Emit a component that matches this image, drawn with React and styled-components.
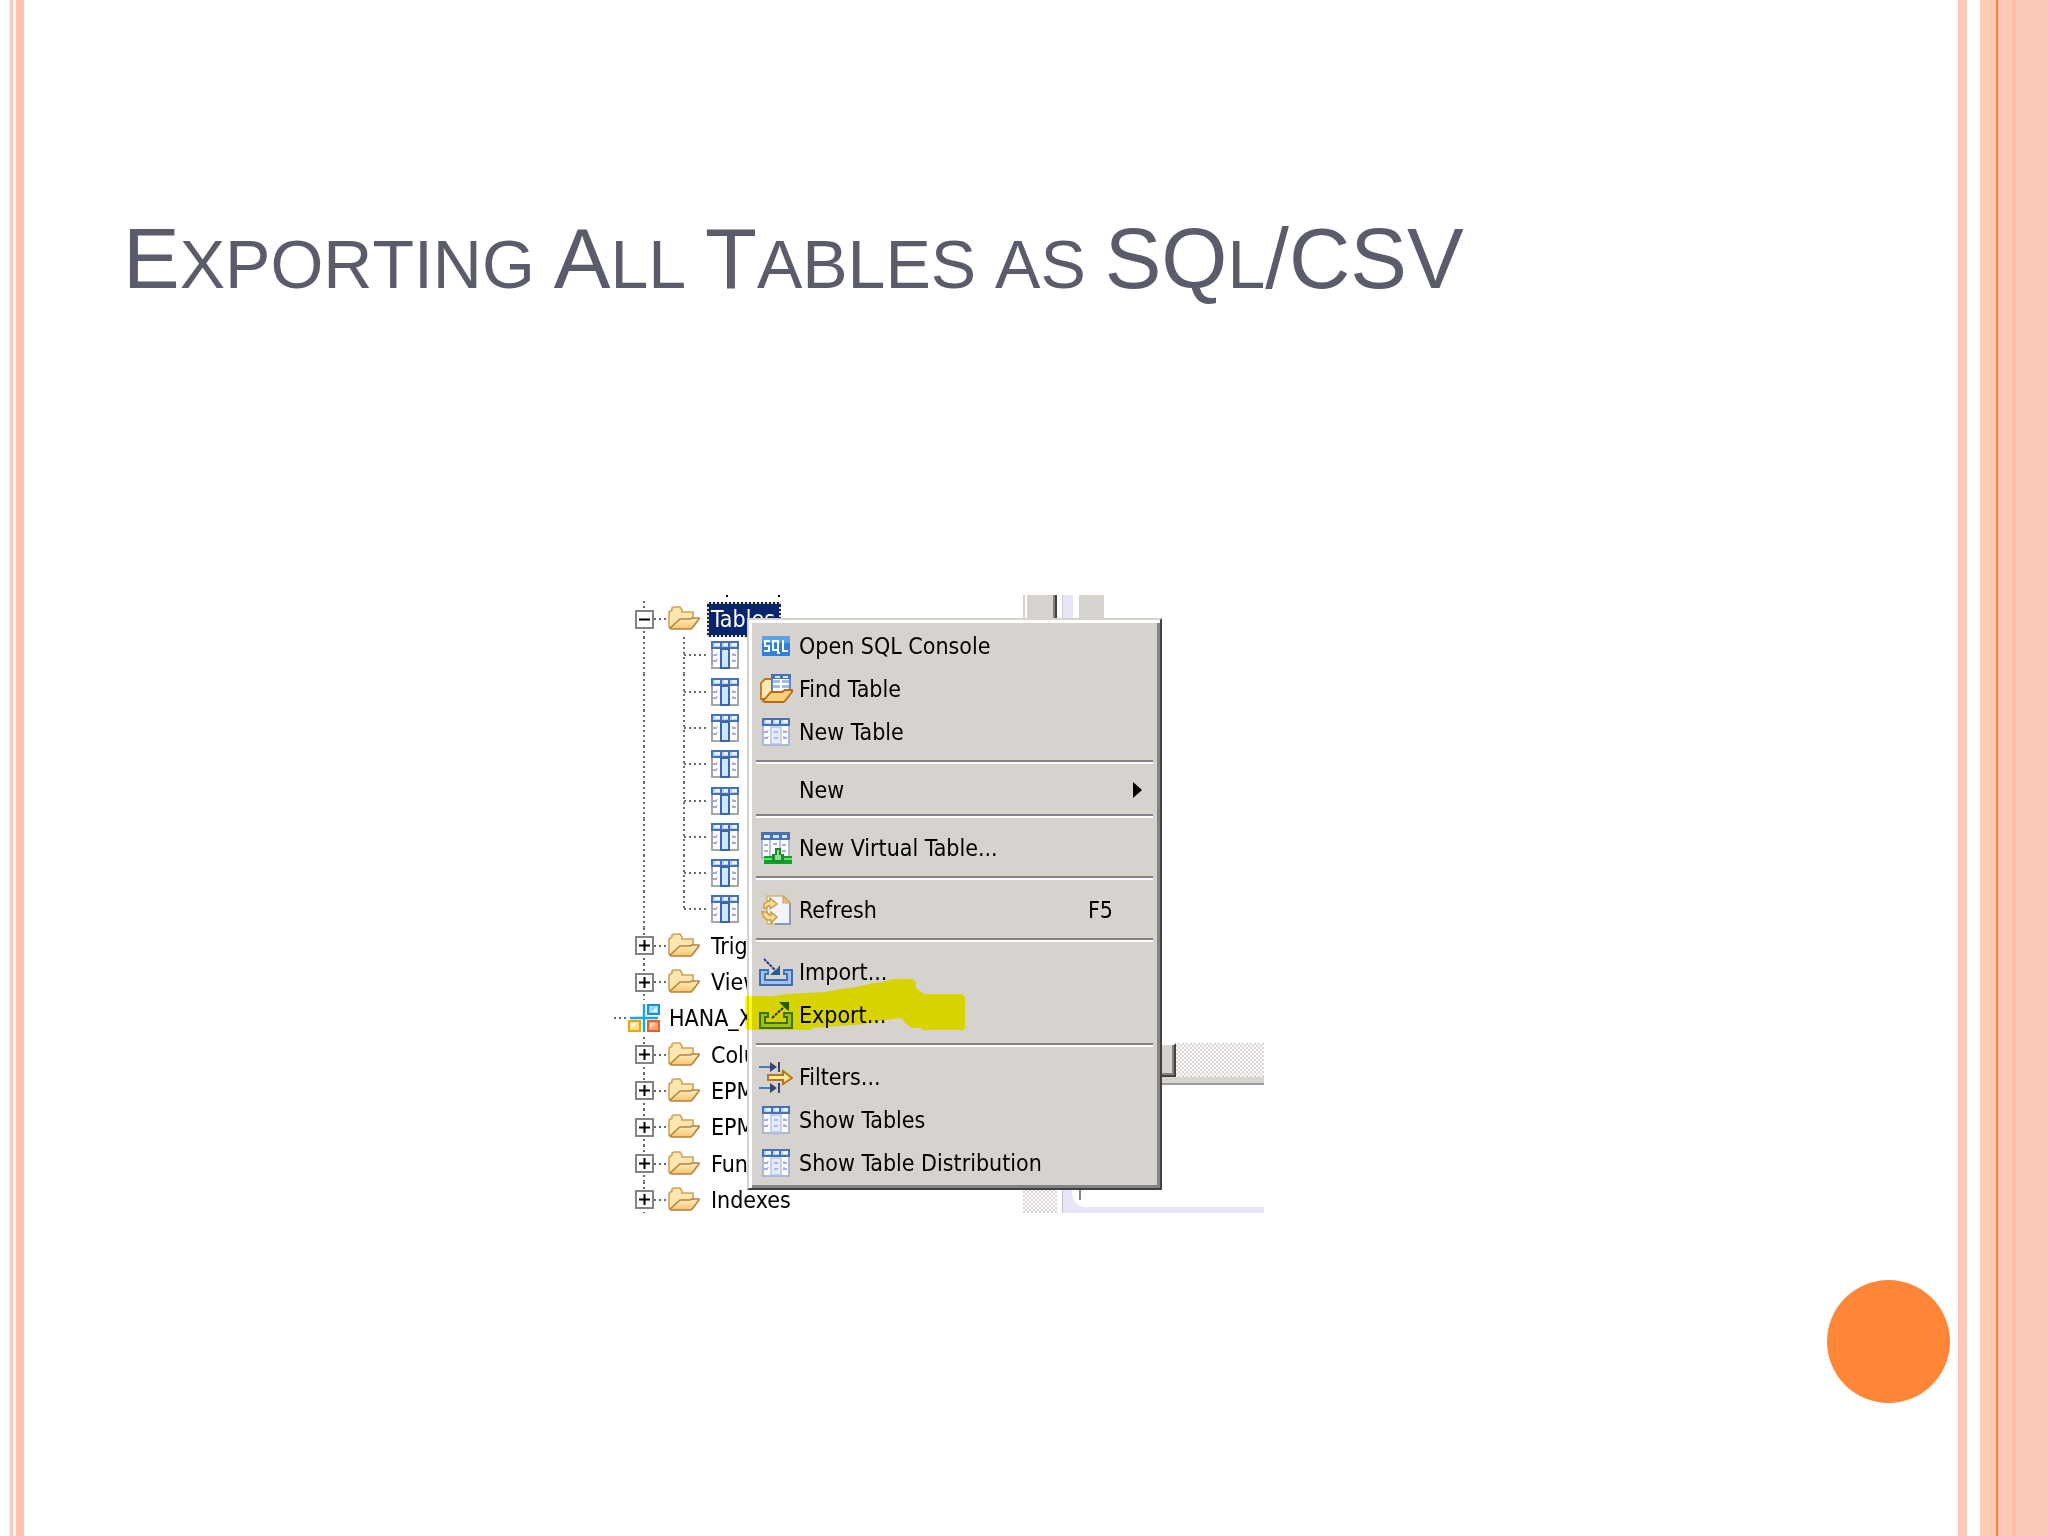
import React from 'react';
import styled, { createGlobalStyle, css } from 'styled-components';

const face = '#d6d3ce';
const shade = '#848284';
const dark = '#424142';
const lavender = '#e7e5f7';

const GlobalStyle = createGlobalStyle`
  *, *::before, *::after { box-sizing: border-box; }
  body { margin: 0; background: #fefffe; }
  button { font: inherit; color: inherit; border: 0; background: none; padding: 0; text-align: left; }
`;

const Slide = styled.div`
  display: flex;
  min-height: 100vh;
  overflow: hidden;
  font-family: 'Liberation Sans', Arial, sans-serif;
`;

const Stripe = styled.div`
  flex: 0 0 ${(p) => p.$w}px;
  background: ${(p) => p.$c};
`;

const Content = styled.main`
  flex: 1;
  min-width: 0;
  display: flex;
  flex-direction: column;
  padding: 209px 0 133px;
`;

const Title = styled.h1`
  margin: 0;
  padding-left: 99px;
  font-size: 85px;
  line-height: 100px;
  font-weight: 400;
  font-kerning: none;
  color: #5a5c6b;
  white-space: nowrap;
`;

const Small = styled.span`
  font-size: 68px;
  text-transform: uppercase;
`;

const FigureArea = styled.section`
  display: flex;
  justify-content: center;
  padding: 281px 104px 0 0;
`;

const Footer = styled.footer`
  display: flex;
  justify-content: flex-end;
  margin-top: auto;
  padding-right: 8px;
`;

const Disc = styled.div`
  width: 123px;
  height: 123px;
  border-radius: 50%;
  background: #ff8637;
`;

const Shot = styled.div`
  position: relative;
  display: grid;
  grid-template-columns: 409px 34px 5px 202px;
  height: 618px;
  background: #fff;
  font-family: 'DejaVu Sans Condensed', 'DejaVu Sans', sans-serif;
  font-size: 23px;
  line-height: 28px;
  color: #000;
`;

/* ---- tree ---- */

const TreePane = styled.div`
  min-width: 0;
  height: 618px;
  overflow: hidden;
`;

const CutRow = styled.div`
  display: flex;
  justify-content: space-between;
  height: 6px;
  width: 166px;
  padding-left: 112px;
`;

const Mark = styled.span`
  width: 2px;
  height: 2px;
  background: #000;
`;

const Tree = styled.ul`
  list-style: none;
  margin: 0;
  padding: 0;
  display: grid;
  grid-auto-rows: 1fr;
  height: 617px;
`;

const Row = styled.li`
  display: grid;
  grid-template-columns: ${(p) => (p.$system ? '14px 32px 5px 1fr' : '20px 20px 14px 32px 7px 1fr')};
  align-items: center;
  min-height: 0;
  white-space: nowrap;
`;

const dotsDown = css`
  background: repeating-linear-gradient(180deg, #6b6b6b 0 2px, transparent 2px 5px) center / 2px 100% no-repeat;
`;

const DotsAcross = styled.span`
  height: 2px;
  background: repeating-linear-gradient(90deg, #6b6b6b 0 2px, transparent 2px 5px);
`;

const Rail = styled.span`
  align-self: ${(p) => (p.$half ? 'start' : 'stretch')};
  height: ${(p) => (p.$half ? '50%' : 'auto')};
  display: flex;
  align-items: center;
  justify-content: center;
  ${dotsDown}
`;

const Branch = styled(DotsAcross)`
  grid-column: 4 / 6;
  grid-row: 1;
  margin-left: 16px;
`;

const BranchRail = styled(Rail)`
  grid-column: 4;
  grid-row: 1;
`;

const Expander = styled.button`
  width: 19px;
  height: 19px;
  border: 2px solid ${shade};
  background: #fff;
  display: flex;
`;

const Label = styled.span`
  padding-left: 4px;
  display: flex;
  align-items: center;
`;

const Selected = styled.span`
  display: block;
  width: 74px;
  height: 35px;
  padding: 2px 4px;
  line-height: 31px;
  color: #fff;
  background: #08246b;
  outline: 2px dotted #f4dc94;
  outline-offset: -2px;
`;

/* ---- editor remnants ---- */

const dither = css`
  background: repeating-conic-gradient(#d9d3d2 0 25%, #fff 0 50%) 0 0 / 4px 4px;
`;

const ScrollColumn = styled.div`
  display: flex;
  flex-direction: column;
  justify-content: space-between;
`;

const ScrollThumb = styled.div`
  height: 24px;
  background: linear-gradient(90deg, ${face} 0 2px, #fff 2px 4px, ${face} 4px 30px, ${shade} 30px 32px, ${dark} 32px);
`;

const Dither = styled.div`
  height: 24px;
  ${dither}
`;

const EditorColumn = styled.div`
  display: flex;
  flex-direction: column;
`;

const EditorTop = styled.div`
  height: 24px;
  width: 42px;
  background: linear-gradient(90deg, ${face} 0 1px, ${lavender} 1px 11px, #fff 11px 17px, ${face} 17px);
`;

const HScroll = styled.div`
  margin-top: 424px;
  height: 42px;
  display: flex;
  border-bottom: 2px solid #9c9a9c;
  background: ${face};
`;

const HThumb = styled.div`
  width: 114px;
  height: 34px;
  background: ${face};
  border: solid;
  border-width: 2px 2px 2px 0;
  border-color: #fff ${dark} ${dark} #fff;
  box-shadow: inset -2px -2px 0 ${shade};
`;

const HTrack = styled.div`
  flex: 1;
  height: 34px;
  ${dither}
`;

const EditorBottom = styled.div`
  margin-top: auto;
  height: 24px;
  border-left: 1px solid #c6c3c6;
  background: ${lavender};
  padding: 0 0 6px 9px;
`;

const EditorPage = styled.div`
  height: 18px;
  background: linear-gradient(${shade}, ${shade}) 7px 0 / 2px 11px no-repeat #fff;
  border-bottom-left-radius: 14px;
`;

/* ---- context menu ---- */

const Menu = styled.div`
  position: absolute;
  left: 133px;
  top: 23px;
  width: 415px;
  background: ${face};
  border: 2px solid;
  border-color: ${face} ${dark} ${dark} ${face};
  box-shadow: inset 3px 3px 0 #fff, inset -3px -3px 0 ${shade};
  padding: 4px 3px;
`;

const Item = styled.button`
  display: grid;
  grid-template-columns: 36px 1fr auto;
  column-gap: 5px;
  align-items: center;
  width: 100%;
  height: ${(p) => (p.$submenu ? 35 : 43)}px;
  padding: 0 ${(p) => (p.$submenu ? 15 : 44)}px 0 6px;
  white-space: nowrap;
`;

const IconCell = styled.span`
  display: flex;
  justify-content: center;
`;

const Divider = styled.hr`
  margin: 7px 4px 8px 4px;
  height: 4px;
  border: 0;
  border-top: 2px solid ${shade};
  background: #fff;
`;

const Marker = styled.svg`
  position: absolute;
  left: 131px;
  top: 383px;
  mix-blend-mode: multiply;
  pointer-events: none;
`;

/* ---- icons ---- */

const Svg = styled.svg`
  display: block;
  flex: none;
`;

const FolderIcon = () => (
  <Svg width="32" height="26" viewBox="0 0 32 26">
    <defs>
      <linearGradient id="fold" x1="0" y1="0" x2="0" y2="1">
        <stop offset="0" stopColor="#fff0c4" />
        <stop offset="1" stopColor="#f7c46c" />
      </linearGradient>
    </defs>
    <path d="M1 21V6l3-2V2l2-1h6l2 3v2h11v7l-3 9H3z" fill="#ffe6b0" stroke="#cfa25c" strokeWidth="1.6" />
    <path d="M2 22L12 13h10l2-1h7v1l-6 8-2 2H3z" fill="url(#fold)" stroke="#b97f3c" strokeWidth="1.6" />
  </Svg>
);

const TableIcon = ({ soft }) => (
  <Svg width="28" height="28" viewBox="0 0 28 28">
    <rect x="1" y="1" width="26" height="26" fill="#fff" stroke={soft ? '#a9b8d4' : '#a3a6aa'} strokeWidth="2" />
    <rect x="0" y="0" width="28" height="8" fill="#4671b9" />
    <path d="M2 2h7v4H2zM11 2h6v4h-6zM19 2h7v4h-7z" fill="#b4d0f4" />
    <path d="M4 2h5v3H4zM13 2h4v3h-4zM21 2h5v3h-5z" fill="#eaf3ff" />
    {soft ? (
      <path d="M9 9h10v17H9z" fill="#e4ecfc" stroke="#b7c5e4" strokeWidth="1.5" />
    ) : (
      <path d="M10 8h8v19h-8z" fill="#cfe6ff" stroke="#3a66b0" strokeWidth="2" />
    )}
    <path d="M2 14h4M2 20h4M21 14h4M21 20h4" stroke="#8c93cf" strokeWidth="1.6" />
    <path d="M6 12v1M6 18v1M22 12v1M22 18v1" stroke="#c3c9ea" strokeWidth="2" />
    {soft && <path d="M12 14h4M12 20h4" stroke="#9aa6dc" strokeWidth="1.6" />}
  </Svg>
);

const SystemIcon = () => (
  <Svg width="32" height="30" viewBox="0 0 32 30">
    <path d="M16 1v28M2 15h28" stroke="#1aa5e8" strokeWidth="2.4" />
    <rect x="20" y="2" width="11" height="9" fill="#8fdcff" stroke="#1b8fd8" strokeWidth="2" />
    <path d="M23 9l6-5v5z" fill="#fff" opacity=".7" />
    <rect x="1" y="18" width="11" height="10" fill="#ffe08a" stroke="#e6a50e" strokeWidth="2" />
    <path d="M3 26l6-6h-6z" fill="#fff" opacity=".8" />
    <rect x="20" y="18" width="11" height="10" fill="#f9a36f" stroke="#e2622a" strokeWidth="2" />
    <path d="M22 26l6-6h-6z" fill="#fff" opacity=".5" />
  </Svg>
);

const SqlIcon = () => (
  <Svg width="28" height="20" viewBox="0 0 28 20" fill="none">
    <rect width="28" height="20" fill="#2f80d6" />
    <rect width="28" height="7" fill="#5aa2e6" />
    <path d="M8 5H3v5h4v5H2" stroke="#fff" strokeWidth="2" />
    <path d="M16 14V5h-5v9h5M16 14v3h2" stroke="#fff" strokeWidth="2" />
    <path d="M21 4v11h5" stroke="#fff" strokeWidth="2" />
  </Svg>
);

const FindIcon = () => (
  <Svg width="33" height="29" viewBox="0 0 33 29">
    <path d="M1 25V9l4-4h7v20z" fill="#ffe9b0" stroke="#b9771f" strokeWidth="1.8" />
    <rect x="12" y="1" width="18" height="17" fill="#fff" stroke="#4671b9" strokeWidth="1.6" />
    <path d="M11 0h20v5H11z" fill="#4671b9" />
    <path d="M13 6h7v3h-7zM22 6h7v3h-7zM13 11h7v3h-7zM22 11h7v3h-7z" fill="#9fbdf0" />
    <path d="M15 2h5v2h-5zM23 2h5v2h-5z" fill="#dbe9ff" />
    <path d="M3 27L11 18h11l3-2h7v2l-7 9-2 1H5z" fill="#fbce7a" stroke="#b56a14" strokeWidth="1.8" />
  </Svg>
);

const VirtualIcon = () => (
  <Svg width="31" height="32" viewBox="0 0 31 32">
    <rect x="1" y="1" width="27" height="25" fill="#fff" stroke="#a9b8d4" strokeWidth="2" />
    <rect width="29" height="8" fill="#4671b9" />
    <path d="M3 3h6v3H3zM12 3h6v3h-6zM21 3h5v3h-5z" fill="#d5e7fb" />
    <path d="M9 8v17M19 8v17" stroke="#b7c5e4" strokeWidth="2" />
    <path d="M3 13h4M3 19h4M21 13h4M21 19h4M12 12h4" stroke="#8c93cf" strokeWidth="1.6" />
    <path d="M3 24h28v8H3z" fill="#12a02c" />
    <path d="M3 27h28" stroke="#7be07f" strokeWidth="1.8" />
    <path d="M14 16h6v6h3v8H11v-8h3z" fill="#1b8c2c" />
    <path d="M16 18h2v5h2v5h-6v-5h2z" fill="#8fdc8c" />
  </Svg>
);

const RefreshIcon = () => (
  <Svg width="31" height="30" viewBox="0 0 31 30">
    <path d="M6 1h17l6 6v22H6z" fill="#f2f5fd" stroke="#d3b87f" strokeWidth="1.6" />
    <path d="M29 8v21H14" fill="none" stroke="#8c97b4" strokeWidth="1.8" />
    <path d="M22 1v7h7z" fill="#e9c67f" stroke="#c7a567" strokeWidth="1.2" />
    <path d="M3 13V9l4-3h2V3l7 6-7 5v-3H7l-2 2z" fill="#fbdc8c" stroke="#c89a45" strokeWidth="1.4" />
    <path d="M1 17h5l2 3h2v-3l6 5-6 6v-3H6l-4-4z" fill="#fbdc8c" stroke="#c89a45" strokeWidth="1.4" />
  </Svg>
);

const TransferIcon = ({ out }) => (
  <Svg width="34" height="28" viewBox="0 0 34 28" fill="none">
    <path d="M1 12h8v4H6v6h22v-6h-3v-4h8v15H1z" fill="#9ec3ee" stroke="#3f6fb5" strokeWidth="2" />
    {out ? (
      <>
        <path d="M13 17L25 6" stroke="#26348c" strokeWidth="2" strokeDasharray="3 1" />
        <path d="M20 1h10v9l-3-2-4-4z" fill="#1f5f96" />
      </>
    ) : (
      <>
        <path d="M5 1l12 12" stroke="#26348c" strokeWidth="2" strokeDasharray="3 1" />
        <path d="M21 7v10H11l3-3 4-3z" fill="#1f5f96" />
      </>
    )}
  </Svg>
);

const FilterIcon = () => (
  <Svg width="34" height="32" viewBox="0 0 34 32" fill="none">
    <path d="M0 6h12M0 27h12" stroke="#3f7fc0" strokeWidth="2" />
    <path d="M11 1l7 5-7 5zM11 22l7 5-7 5z" fill="#39476b" />
    <path d="M20 1v10M20 22v10" stroke="#39476b" strokeWidth="2" />
    <path d="M9 14h15v-4l9 7-9 6v-4H9z" fill="#ffe79a" stroke="#b5761a" strokeWidth="2" />
  </Svg>
);

const PlusMinus = ({ open }) => (
  <Svg width="15" height="15" viewBox="0 0 15 15">
    <path d={open ? 'M2 7.500h11' : 'M2 7.500h11M7.500 2v11'} stroke="#000" strokeWidth="2" />
  </Svg>
);

const FolderRow = ({ label, open, selected }) => (
  <Row>
    <span />
    <Rail>
      <Expander aria-label={`${open ? 'Collapse' : 'Expand'} ${label}`}>
        <PlusMinus open={open} />
      </Expander>
    </Rail>
    <DotsAcross />
    <FolderIcon />
    <span />
    {selected ? <Selected>{label}</Selected> : <Label>{label}</Label>}
  </Row>
);

const TableRow = ({ last }) => (
  <Row>
    <span />
    <Rail />
    <span />
    <BranchRail $half={last} />
    <Branch />
    <Label>
      <TableIcon />
    </Label>
  </Row>
);

const MenuItem = ({ icon, label, shortcut, submenu }) => (
  <Item role="menuitem" $submenu={submenu}>
    <IconCell>{icon}</IconCell>
    <span>{label}</span>
    {shortcut && <span>{shortcut}</span>}
    {submenu && (
      <Svg width="9" height="16" viewBox="0 0 9 16">
        <path d="M0 0l9 8-9 8z" />
      </Svg>
    )}
  </Item>
);

const tables = [0, 1, 2, 3, 4, 5, 6, 7];

export default function App() {
  return (
    <>
      <GlobalStyle />
      <Slide>
        <Stripe $w={10} $c="#fff" />
        <Stripe $w={3} $c="#fbc9bb" />
        <Stripe $w={3} $c="#fff6ea" />
        <Stripe $w={8} $c="#ffc0ae" />
        <Content>
          <Title>
            E<Small>xporting </Small>A<Small>ll </Small>T<Small>ables as </Small>SQ<Small>l</Small>/CSV
          </Title>
          <FigureArea>
            <Shot>
              <TreePane>
                <CutRow>
                  <Mark />
                  <Mark />
                </CutRow>
                <Tree>
                  <FolderRow label="Tables" open selected />
                  {tables.map((n) => (
                    <TableRow key={n} last={n === tables.length - 1} />
                  ))}
                  <FolderRow label="Trig" />
                  <FolderRow label="View" />
                  <Row $system>
                    <DotsAcross />
                    <SystemIcon />
                    <span />
                    <Label>HANA_X</Label>
                  </Row>
                  <FolderRow label="Colu" />
                  <FolderRow label="EPM" />
                  <FolderRow label="EPM" />
                  <FolderRow label="Fun" />
                  <FolderRow label="Indexes" />
                </Tree>
              </TreePane>
              <ScrollColumn>
                <ScrollThumb />
                <Dither />
              </ScrollColumn>
              <span />
              <EditorColumn>
                <EditorTop />
                <HScroll>
                  <HThumb />
                  <HTrack />
                </HScroll>
                <EditorBottom>
                  <EditorPage />
                </EditorBottom>
              </EditorColumn>
              <Menu role="menu">
                <MenuItem icon={<SqlIcon />} label="Open SQL Console" />
                <MenuItem icon={<FindIcon />} label="Find Table" />
                <MenuItem icon={<TableIcon soft />} label="New Table" />
                <Divider />
                <MenuItem label="New" submenu />
                <Divider />
                <MenuItem icon={<VirtualIcon />} label="New Virtual Table..." />
                <Divider />
                <MenuItem icon={<RefreshIcon />} label="Refresh" shortcut="F5" />
                <Divider />
                <MenuItem icon={<TransferIcon />} label="Import..." />
                <MenuItem icon={<TransferIcon out />} label="Export..." />
                <Divider />
                <MenuItem icon={<FilterIcon />} label="Filters..." />
                <MenuItem icon={<TableIcon soft />} label="Show Tables" />
                <MenuItem icon={<TableIcon soft />} label="Show Table Distribution" />
              </Menu>
              <Marker width="221" height="53" viewBox="0 0 221 53">
                <path
                  d="M0 18H28L42 16L80 14L96 11L112 9L128 5L138 4L148 1H167L171 4V10L179 16H217L220 19V50L218 52H178L176 50H167L160 45L157 40L140 42L120 46L95 48L67 50V52H3L0 50Z"
                  fill="#ffff00"
                />
              </Marker>
            </Shot>
          </FigureArea>
          <Footer>
            <Disc />
          </Footer>
        </Content>
        <Stripe $w={9} $c="#fec8b8" />
        <Stripe $w={13} $c="#fff" />
        <Stripe $w={16} $c="#fccbb4" />
        <Stripe $w={2} $c="#fb8537" />
        <Stripe $w={14} $c="#fbc9b5" />
        <Stripe $w={4} $c="#fdbda3" />
        <Stripe $w={32} $c="#fbcab6" />
      </Slide>
    </>
  );
}
